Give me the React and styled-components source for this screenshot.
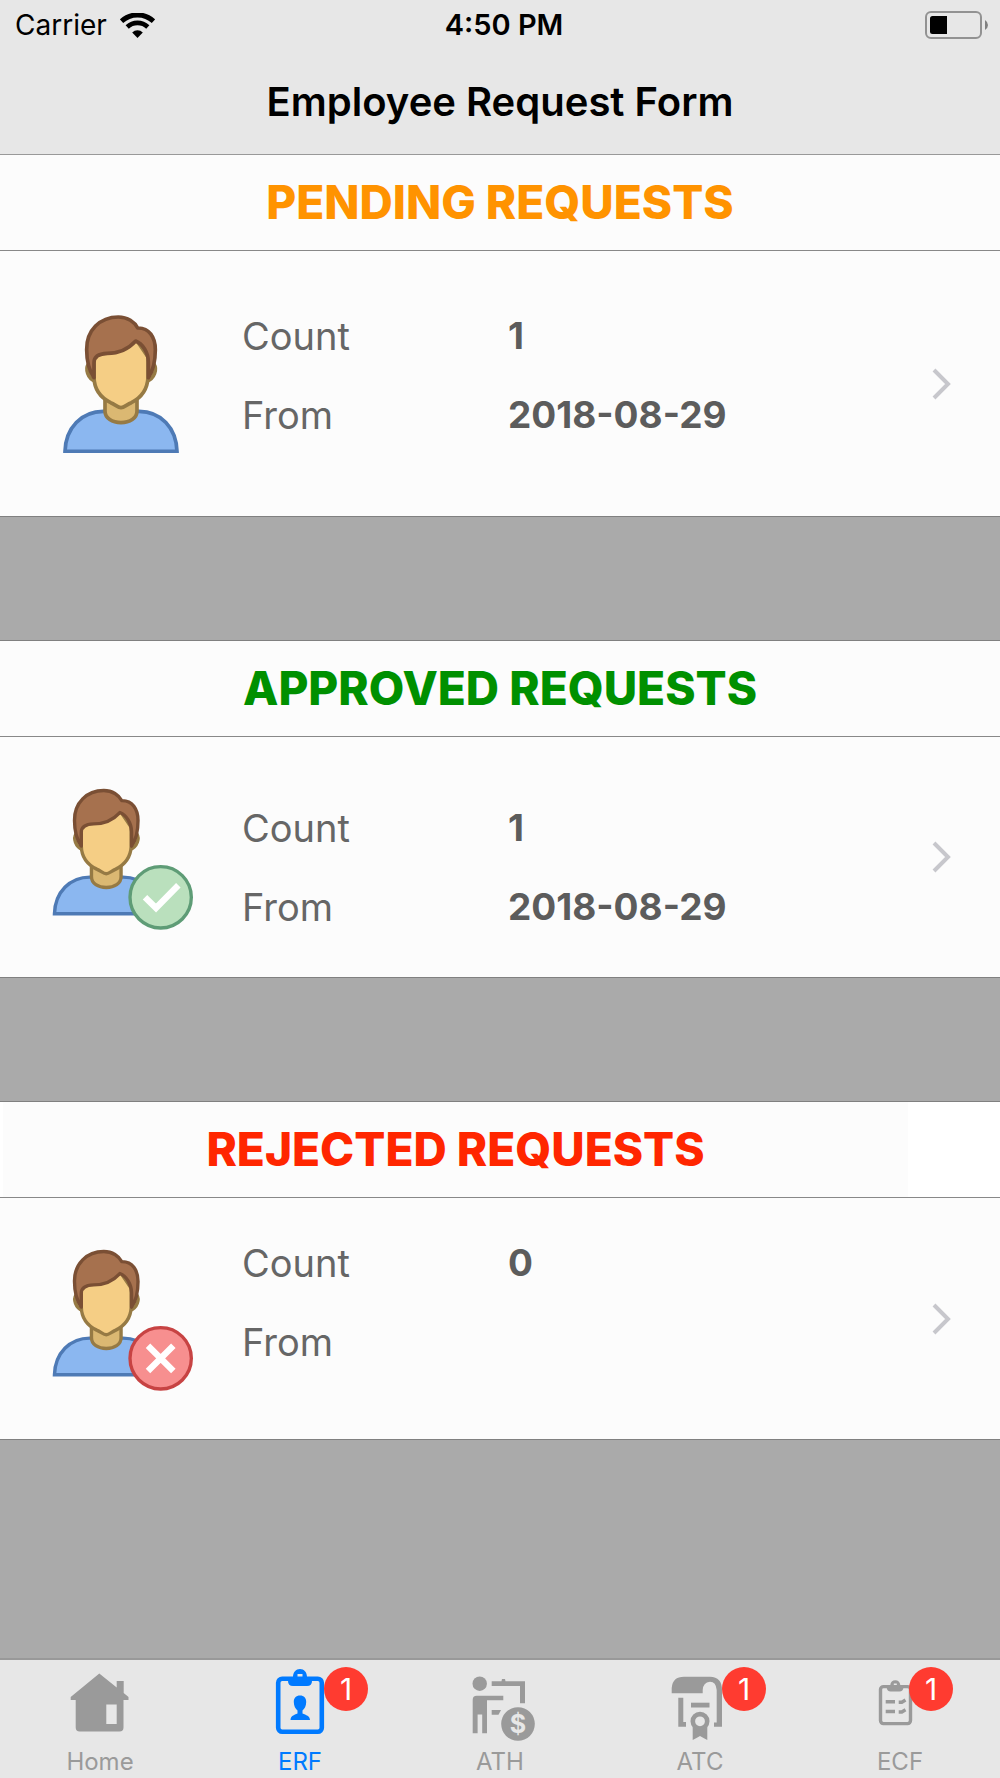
import React, { useState } from 'react'
import styled, { createGlobalStyle } from 'styled-components'

const GlobalStyle = createGlobalStyle`
	* {
		box-sizing: border-box;
	}

	body {
		margin: 0;
		background-color: #aaaaaa;
		font-family: Inter, 'Liberation Sans', sans-serif;
	}
`

const requests = [
	{
		id: 'pending',
		title: 'PENDING REQUESTS',
		color: '#ff9300',
		count: 1,
		from: '2018-08-29',
		minHeight: 265,
		detailsTop: 63
	},
	{
		id: 'approved',
		title: 'APPROVED REQUESTS',
		color: '#009000',
		count: 1,
		from: '2018-08-29',
		status: 'approved',
		minHeight: 240,
		detailsTop: 69
	},
	{
		id: 'rejected',
		title: 'REJECTED REQUESTS',
		color: '#ff2600',
		count: 0,
		from: '',
		status: 'rejected',
		minHeight: 241,
		detailsTop: 43,
		inset: true
	}
]

const WifiIcon = () => (
	<svg width='35' height='25' viewBox='0 0 35 25' fill='none' stroke='#000'>
		<path d='M1.5 8.2 A23.5 23.5 0 0 1 33.5 8.2' strokeWidth='5' />
		<path d='M7.2 14 A15 15 0 0 1 27.8 14' strokeWidth='4.6' />
		<path d='M17.5 25 L12.2 19.4 A7.8 7.8 0 0 1 22.8 19.4 Z' fill='#000' stroke='none' />
	</svg>
)

const BatteryIcon = () => (
	<svg width='64' height='28' viewBox='0 0 64 28'>
		<rect x='1' y='1' width='55' height='26' rx='5' fill='none' stroke='#929292' strokeWidth='2' />
		<path d='M7.5 5 H22 V23 H7.5 Q5 23 5 20.5 V7.5 Q5 5 7.5 5 Z' fill='#000' />
		<path d='M60 9 Q63 11 63 14 Q63 17 60 19 Z' fill='#808080' />
	</svg>
)

const Person = () => (
	<g strokeWidth='11'>
		<path
			d='M75 483 C77 412 125 363 190 363 H297 C362 363 409 412 411 483 Z'
			fill='#8bb7f0'
			stroke='#4e7ab5'
		/>
		<path
			d='M195 325 V362 C195 384 217 397 243 397 C269 397 291 384 291 362 V325 Z'
			fill='#dbb872'
			stroke='#967a44'
		/>
		<path
			d='M145 222 C136 236 142 264 166 273 V222 Z M342 222 C351 236 345 264 320 273 V222 Z'
			fill='#dbb872'
			stroke='#967a44'
		/>
		<path
			d='M162 200 V262 C163 300 186 324 212 337 C225 342 234 352 243 352 C252 352 261 342 274 337 C300 324 322 300 324 262 V200 L290 150 H200 Z'
			fill='#f5ce85'
			stroke='#967a44'
		/>
		<path
			d='M162 262 C149 243 140 215 140 178 C139 120 180 80 235 80 C263 80 284 95 293 113 C328 112 346 142 346 178 C346 215 338 243 325 262 V215 C325 187 308 160 287 152 C260 182 232 189 202 189 C178 190 162 198 162 217 Z'
			fill='#a6714e'
			stroke='#7a4f34'
			strokeLinejoin='round'
		/>
	</g>
)

const Avatar = ({ status }) => {
	if (!status) {
		return (
			<svg width='117' height='139' viewBox='69 71 351 417'>
				<Person />
			</svg>
		)
	}
	const approved = status === 'approved'
	return (
		<svg width='144' height='147' viewBox='27 42 432 441'>
			<g transform='translate(-26 -12) scale(0.925 0.918)'>
				<Person />
			</g>
			<circle
				cx='362'
				cy='382'
				r='92'
				fill={approved ? '#bae0bd' : '#f78f8f'}
				stroke={approved ? '#5e9c76' : '#c74343'}
				strokeWidth='10'
			/>
			<path
				d={approved ? 'M315 382 L348 414 L415 346' : 'M324 344 L400 420 M400 344 L324 420'}
				fill='none'
				stroke='#fff'
				strokeWidth='19'
			/>
		</svg>
	)
}

const Chevron = () => (
	<svg width='20' height='32' viewBox='0 0 20 32'>
		<path d='M2 2 L16 16 L2 30' fill='none' stroke='#c7c7cc' strokeWidth='4' />
	</svg>
)

const HomeIcon = () => (
	<svg width='72' height='72' viewBox='0 0 72 72' fill='currentColor'>
		<path
			fillRule='evenodd'
			d='M35.3 4.5 L52.7 18.5 V12 H59.7 V24 L64.5 28 V31 H59.5 V58.5 Q59.5 62.5 55.5 62.5 H15.7 Q11.7 62.5 11.7 58.5 V31 H6.7 V28 Z M42.3 35.5 V55 H52.7 V35.5 Z'
		/>
	</svg>
)

const ErfIcon = () => (
	<svg width='72' height='72' viewBox='0 0 72 72' fill='currentColor'>
		<rect x='14.2' y='9.8' width='43.6' height='53' rx='4' fill='none' stroke='currentColor' strokeWidth='4.6' />
		<path
			fillRule='evenodd'
			d='M24 8 H29 C29 3 32 0 36 0 C40 0 43 3 43 8 H48 V12 Q48 17 43 17 H29 Q24 17 24 12 Z M33.5 5 V9.5 H38.5 V5 Z'
		/>
		<path d='M36 26.5 C40 26.5 42.2 29 42.2 33 C42.2 37 40.5 40 38.5 41.5 V44.5 C42 46 46 47 46 51 H26.5 C26.5 47 30 46 33.5 44.5 V41.5 C31.5 40 29.8 37 29.8 33 C29.8 29 32 26.5 36 26.5 Z' />
	</svg>
)

const AthIcon = () => (
	<svg width='72' height='72' viewBox='0 0 72 72' fill='currentColor'>
		<circle cx='15.7' cy='14.7' r='7.2' />
		<path d='M12.7 26.7 H39.3 V31.3 H23 V64.3 H18.2 V45.5 H13.6 V64.3 H8.7 V30.7 Q8.7 26.7 12.7 26.7 Z' />
		<path d='M27.7 12.3 H37.5 L38 10 H41 L41.5 12.3 H61 V34.3 H56 V17 H27.7 Z' />
		<path d='M27.7 41 H37 L34.5 45.7 H27.7 Z' />
		<circle cx='54' cy='55' r='16.8' />
		<text x='54' y='64' textAnchor='middle' fontSize='25' fontWeight='700' fill='#e7e7e7'>
			$
		</text>
	</svg>
)

const AtcIcon = () => (
	<svg width='72' height='72' viewBox='0 0 72 72' fill='currentColor'>
		<path d='M7.7 24.3 V19 Q8.5 7.7 20 7.7 H46 Q58 8 58 21 V57.7 H50 V53.5 H52.7 V21 Q52 12.7 46 12.7 Q39 13.5 38.7 21 V24.3 Z' />
		<path d='M14.3 28.7 H19.3 V53 H22 V57.7 H14.3 Z' />
		<rect x='27' y='33.7' width='18.5' height='4.8' />
		<circle cx='36' cy='52.3' r='7.2' fill='none' stroke='currentColor' strokeWidth='4.6' />
		<path d='M28.7 58 Q36 64 43.3 58 V71 L39.5 69 L36 67 L32.5 69 L28.7 71 Z' />
	</svg>
)

const EcfIcon = () => (
	<svg width='72' height='72' viewBox='0 0 72 72' fill='none' stroke='currentColor' strokeWidth='3.4'>
		<rect x='16.5' y='17.6' width='30' height='37' rx='3' />
		<path
			fill='currentColor'
			stroke='none'
			fillRule='evenodd'
			d='M22.7 16 H26.3 C26.5 13 28.5 11.3 31.3 11.3 C34 11.3 36 13 36.3 16 H39.5 V18.5 Q39 22.5 35.5 22.5 H26.7 Q23 22.5 22.7 18.5 Z M29.8 14.5 V18 H32.8 V14.5 Z'
		/>
		<path d='M21.7 32.8 H31 M21.7 42.5 H31 M34.7 33.2 H37.8 L41.5 31 M34.7 43 H37.8 L41.5 40.8' />
	</svg>
)

const tabs = [
	{ label: 'Home', icon: HomeIcon },
	{ label: 'ERF', icon: ErfIcon, badge: 1, badgeLeft: 60 },
	{ label: 'ATH', icon: AthIcon },
	{ label: 'ATC', icon: AtcIcon, badge: 1, badgeLeft: 58 },
	{ label: 'ECF', icon: EcfIcon, badge: 1, badgeLeft: 45 }
]

const Screen = styled.div`
	min-height: 100vh;
	display: flex;
	flex-direction: column;
	background-color: #aaaaaa;
`

const Header = styled.header`
	background-color: #e7e7e7;
	border-bottom: 1px solid #999999;
`

const StatusBar = styled.div`
	display: grid;
	grid-template-columns: 1fr auto 1fr;
	align-items: center;
	height: 50px;
	padding: 0 11px 0 15px;
	font-size: 28px;
	line-height: 34px;
`

const Carrier = styled.div`
	display: flex;
	align-items: center;
	gap: 13px;
`

const Clock = styled.div`
	padding-left: 4px;
	font-size: 29px;
	font-weight: 600;
`

const Battery = styled.div`
	display: flex;
	justify-content: flex-end;
`

const PageTitle = styled.h1`
	margin: 0;
	padding: 28px 0;
	font-size: 40px;
	line-height: 48px;
	font-weight: 600;
	text-align: center;
`

const Content = styled.main`
	flex: 1;
	display: flex;
	flex-direction: column;
	gap: 123px;
`

const Section = styled.section`
	border-top: 1px solid #808080;
	border-bottom: 1px solid #808080;
	background-color: #fcfcfc;

	&:first-child {
		border-top: none;
	}
`

const SectionHeader = styled.div`
	padding: ${props => (props.$inset ? '0 92px 0 3px' : '0')};
	background-color: #ffffff;
	border-bottom: 1px solid #888888;
`

const SectionTitle = styled.h2`
	margin: 0;
	padding: 19px 0 20px;
	background-color: #fcfcfc;
	color: ${props => props.$color};
	font-size: 46px;
	line-height: 56px;
	font-weight: 800;
	text-align: center;
`

const Row = styled.a`
	display: flex;
	align-items: center;
	min-height: ${props => props.$minHeight}px;
	padding-right: 48px;
	color: inherit;
	text-decoration: none;
`

const AvatarCell = styled.div`
	width: 242px;
	display: flex;
	justify-content: center;
`

const Details = styled.dl`
	flex: 1;
	align-self: flex-start;
	display: grid;
	grid-template-columns: 266px 1fr;
	grid-auto-rows: 44px;
	row-gap: 35px;
	margin: 0;
	padding-top: ${props => props.$top}px;
	font-size: 38px;
	line-height: 44px;
`

const Label = styled.dt`
	color: #666666;
`

const Value = styled.dd`
	margin: 0;
	color: #5c5c5c;
	font-size: 37px;
	font-weight: 700;
`

const TabBar = styled.nav`
	display: flex;
	background-color: #e7e7e7;
	border-top: 2px solid #999999;
`

const Tab = styled.a`
	flex: 1;
	display: flex;
	flex-direction: column;
	align-items: center;
	gap: 7px;
	padding: 9px 0 2px;
	color: ${props => (props.$active ? '#007aff' : '#9a9a9a')};
	font-size: 24px;
	line-height: 28px;
	text-decoration: none;
`

const TabIcon = styled.span`
	position: relative;
	height: 72px;
`

const Badge = styled.span`
	position: absolute;
	top: -2px;
	left: ${props => props.$left}px;
	width: 44px;
	height: 44px;
	border-radius: 50%;
	background-color: #ff3b30;
	color: white;
	font-size: 30px;
	line-height: 44px;
	text-align: center;
`

const App = () => {
	const [activeTab, setActiveTab] = useState('ERF')

	return (
		<Screen>
			<GlobalStyle />
			<Header>
				<StatusBar>
					<Carrier>
						Carrier
						<WifiIcon />
					</Carrier>
					<Clock>4:50 PM</Clock>
					<Battery>
						<BatteryIcon />
					</Battery>
				</StatusBar>
				<PageTitle>Employee Request Form</PageTitle>
			</Header>
			<Content>
				{requests.map(req => (
					<Section key={req.id}>
						<SectionHeader $inset={req.inset}>
							<SectionTitle $color={req.color}>{req.title}</SectionTitle>
						</SectionHeader>
						<Row href={`#${req.id}`} $minHeight={req.minHeight}>
							<AvatarCell>
								<Avatar status={req.status} />
							</AvatarCell>
							<Details $top={req.detailsTop}>
								<Label>Count</Label>
								<Value>{req.count}</Value>
								<Label>From</Label>
								<Value>{req.from}</Value>
							</Details>
							<Chevron />
						</Row>
					</Section>
				))}
			</Content>
			<TabBar>
				{tabs.map(({ label, icon: Icon, badge, badgeLeft }) => (
					<Tab
						key={label}
						href={`#${label}`}
						$active={label === activeTab}
						onClick={() => setActiveTab(label)}
					>
						<TabIcon>
							<Icon />
							{badge && <Badge $left={badgeLeft}>{badge}</Badge>}
						</TabIcon>
						<span>{label}</span>
					</Tab>
				))}
			</TabBar>
		</Screen>
	)
}

export default App
